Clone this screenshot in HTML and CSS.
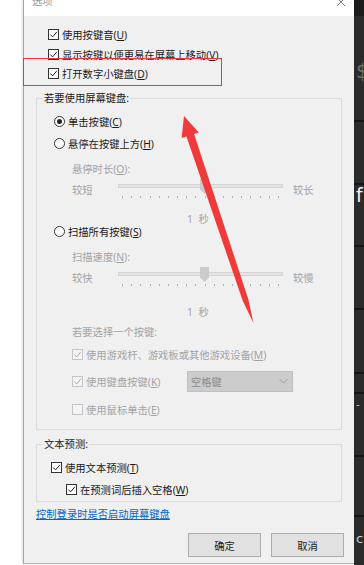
FILE: index.html
```html
<!DOCTYPE html>
<html lang="zh-CN">
<head>
<meta charset="UTF-8" />
<title>选项</title>
<link rel="stylesheet" href="styles.css">
</head>
<body>
<div class="screen">
  <div class="desk-left"></div>

  <div class="dialog">
    <div class="titlebar">
      <span class="title">选项</span>
      <svg class="close" width="10" height="10" viewBox="0 0 10 10">
        <path d="M1 1 L9 9 M9 1 L1 9" stroke="#808080" stroke-width="1" fill="none"/>
      </svg>
    </div>

    <div class="content">
      <div class="checks">
        <label class="check"><span class="box"><svg viewBox="0 0 9 9"><path d="M1.3 4.6 L3.6 6.9 L7.9 1.8"/></svg></span><span>使用按键音(<u>U</u>)</span></label>
        <label class="check"><span class="box"><svg viewBox="0 0 9 9"><path d="M1.3 4.6 L3.6 6.9 L7.9 1.8"/></svg></span><span>显示按键以便更易在屏幕上移动(<u>V</u>)</span></label>
        <label class="check"><span class="box"><svg viewBox="0 0 9 9"><path d="M1.3 4.6 L3.6 6.9 L7.9 1.8"/></svg></span><span>打开数字小键盘(<u>D</u>)</span></label>
      </div>

      <fieldset class="group group-keys">
        <legend>若要使用屏幕键盘:</legend>

        <label class="radio-row"><span class="radio on"></span><span>单击按键(<u>C</u>)</span></label>
        <label class="radio-row"><span class="radio"></span><span>悬停在按键上方(<u>H</u>)</span></label>

        <div class="sub hover-label">悬停时长(<u>O</u>):</div>
        <div class="slider-row">
          <span class="s-label">较短</span>
          <div class="slider">
            <div class="track"></div>
            <div class="thumb"></div>
            <div class="ticks"><i></i><i></i><i></i><i></i><i></i><i></i><i></i><i></i><i></i><i></i><i></i><i></i><i></i><i></i><i></i><i></i><i></i><i></i></div>
          </div>
          <span class="s-label">较长</span>
        </div>
        <div class="value v1">1 秒</div>

        <label class="radio-row scan"><span class="radio"></span><span>扫描所有按键(<u>S</u>)</span></label>

        <div class="sub scan-label">扫描速度(<u>N</u>):</div>
        <div class="slider-row">
          <span class="s-label">较快</span>
          <div class="slider">
            <div class="track"></div>
            <div class="thumb"></div>
            <div class="ticks"><i></i><i></i><i></i><i></i><i></i><i></i><i></i><i></i><i></i><i></i><i></i><i></i><i></i><i></i><i></i><i></i><i></i><i></i></div>
          </div>
          <span class="s-label">较慢</span>
        </div>
        <div class="value v2">1 秒</div>

        <div class="sub pick-label">若要选择一个按键:</div>
        <label class="check dim row-m"><span class="box"><svg viewBox="0 0 9 9"><path d="M1.3 4.6 L3.6 6.9 L7.9 1.8"/></svg></span><span>使用游戏杆、游戏板或其他游戏设备(<u>M</u>)</span></label>
        <div class="key-row">
          <label class="check dim"><span class="box"><svg viewBox="0 0 9 9"><path d="M1.3 4.6 L3.6 6.9 L7.9 1.8"/></svg></span><span>使用键盘按键(<u>K</u>)</span></label>
          <div class="select">
            <span>空格键</span>
            <svg width="9" height="6" viewBox="0 0 9 6"><path d="M0.5 1 L4.5 5 L8.5 1" stroke="#9a9a9a" fill="none"/></svg>
          </div>
        </div>
        <label class="check dim row-e"><span class="box"></span><span>使用鼠标单击(<u>E</u>)</span></label>
      </fieldset>

      <fieldset class="group group-text">
        <legend>文本预测:</legend>
        <label class="check row-t"><span class="box"><svg viewBox="0 0 9 9"><path d="M1.3 4.6 L3.6 6.9 L7.9 1.8"/></svg></span><span>使用文本预测(<u>T</u>)</span></label>
        <label class="check row-w"><span class="box"><svg viewBox="0 0 9 9"><path d="M1.3 4.6 L3.6 6.9 L7.9 1.8"/></svg></span><span>在预测词后插入空格(<u>W</u>)</span></label>
      </fieldset>

      <a class="link" href="#">控制登录时是否启动屏幕键盘</a>

      <div class="buttons">
        <button class="btn">确定</button>
        <button class="btn">取消</button>
      </div>
    </div>
  </div>

  <div class="desk-right">
    <div class="strip top"></div>
    <div class="strip h104"><span class="glyph dollar">$</span></div>
    <div class="strip h61"></div>
    <div class="strip h60"><span class="glyph f">f</span></div>
    <div class="strip h61"></div>
    <div class="strip h62"></div>
    <div class="strip h18"></div>
    <div class="strip h61"><span class="glyph dash">-</span></div>
    <div class="strip h58"></div>
    <div class="strip last"><span class="glyph c">c</span></div>
  </div>

  <!-- 标注 -->
  <div class="mark"></div>
  <svg class="arrow" width="364" height="565" viewBox="0 0 364 565">
    <polygon fill="#f03a3a" points="184,116 198.8,132.4 194.1,133.9 248.3,299.2 253.5,323 242.7,300.8 186.5,136.4 181.6,138"/>
  </svg>
</div>
</body>
</html>
```

FILE: styles.css
```css
/* Reset */
* {
  margin: 0;
  padding: 0;
  box-sizing: border-box;
}

body {
  width: 364px;
  height: 565px;
  overflow: hidden;
  background: #fff;
  font-family: "Noto Sans", "Noto Sans CJK SC", sans-serif;
  font-size: 10.3px;
  color: #1a1a1a;
}

u {
  text-decoration: underline;
  text-underline-offset: 1px;
}

.screen {
  position: relative;
  display: flex;
  height: 565px;
}

.desk-left {
  width: 23px;
  background: #fff;
}

/* 对话框 */
.dialog {
  width: 331px;
  align-self: flex-start;
  background: #f0f0f0;
  border-left: 1px solid #a6a6a6;
  border-bottom: 1px solid #b4b4b4;
  box-shadow: -1px 0 2px rgba(0, 0, 0, 0.12);
  display: flex;
  flex-direction: column;
}

.titlebar {
  height: 16px;
  background: #fff;
  display: flex;
  justify-content: space-between;
  align-items: flex-start;
  overflow: hidden;
}

.title {
  margin: -6px 0 0 8px;
  line-height: 14px;
  color: #9a9a9a;
}

.close {
  margin: -3px 8px 0 0;
}

.content {
  padding: 9px 12px 6px;
  display: flex;
  flex-direction: column;
}

/* 复选框 */
.check {
  display: flex;
  align-items: center;
  gap: 3px;
  height: 19.5px;
  white-space: nowrap;
}

.box {
  width: 11px;
  height: 11px;
  border: 1px solid #333;
  background: #fff;
  display: flex;
  flex: none;
}

.box svg {
  width: 9px;
  height: 9px;
}

.box path {
  stroke: #222;
  stroke-width: 1;
  fill: none;
}

.checks {
  padding-left: 12px;
}

.check.dim {
  color: #a3a3a3;
}

.check.dim .box {
  border-color: #c4c4c4;
  background: #f4f4f4;
}

.check.dim .box path {
  stroke: #aaa;
}

/* 分组框 */
.group {
  border: 1px solid #dcdcdc;
  min-inline-size: 0;
}

.group legend {
  margin-left: 6px;
  padding: 0 1px;
  line-height: 14px;
}

.group-keys {
  margin-top: 7.5px;
  padding: 5px 0 10px;
}

.radio-row {
  display: flex;
  align-items: center;
  gap: 3px;
  height: 22px;
  padding-left: 17px;
}

.radio-row.scan {
  height: 12px;
}

.radio {
  width: 11px;
  height: 11px;
  border: 1px solid #333;
  border-radius: 50%;
  background: #fff;
  display: flex;
  align-items: center;
  justify-content: center;
}

.radio.on::after {
  content: "";
  width: 5px;
  height: 5px;
  border-radius: 50%;
  background: #222;
}

.sub {
  color: #a3a3a3;
  padding-left: 35px;
  height: 18px;
  line-height: 18px;
}

.hover-label {
  margin-top: 6px;
}

.scan-label {
  margin-top: 11px;
}

.pick-label {
  margin-top: 6px;
  height: 14px;
  line-height: 14px;
}

/* 滑块 */
.slider-row {
  display: flex;
  height: 24px;
  padding-left: 35px;
  color: #a3a3a3;
}

.s-label {
  width: 46px;
  line-height: 25px;
}

.slider-row .s-label:last-child {
  margin-left: 10px;
}

.slider {
  position: relative;
  width: 165px;
}

.track {
  margin-top: 6px;
  height: 4px;
  border: 1px solid #d2d2d2;
  background: #e6e6e6;
}

.thumb {
  position: absolute;
  top: 1px;
  left: 82px;
  width: 9px;
  height: 15px;
  background: #cbcbcb;
  clip-path: polygon(0 0, 100% 0, 100% 68%, 50% 100%, 0 68%);
}

.ticks {
  display: flex;
  justify-content: space-between;
  margin: 8px 4px 0;
}

.ticks i {
  width: 1px;
  height: 2px;
  background: #b4b4b4;
}

.value {
  color: #a3a3a3;
  padding-left: 150px;
  height: 12px;
  line-height: 12px;
  word-spacing: 3px;
}

.v1 {
  margin-top: 11px;
}

.v2 {
  margin-top: 15px;
  height: 14px;
  line-height: 14px;
}

.row-m {
  margin-top: 5px;
  height: 20px;
  padding-left: 35px;
}

.key-row {
  display: flex;
  align-items: center;
  margin-top: 6px;
  height: 22px;
  padding-left: 35px;
}

.key-row .check {
  width: 115px;
}

.select {
  width: 106px;
  height: 21px;
  background: #cccccc;
  border: 1px solid #bfbfbf;
  color: #8a8a8a;
  display: flex;
  align-items: center;
  justify-content: space-between;
  padding: 0 4px 0 3px;
}

.row-e {
  margin-top: 7px;
  height: 20px;
  padding-left: 35px;
}

.group-text {
  margin-top: 7px;
  padding: 6px 0 2px;
}

.row-t {
  height: 20px;
  padding-left: 14px;
}

.row-w {
  margin-top: 2px;
  height: 20px;
  padding-left: 29px;
}

.link {
  margin-top: 5px;
  height: 14px;
  line-height: 14px;
  color: #0066cc;
  text-decoration: underline;
  align-self: flex-start;
}

.buttons {
  display: flex;
  justify-content: flex-end;
  gap: 10px;
  margin: 12px -2px 0 0;
}

.btn {
  width: 73px;
  height: 24px;
  background: #e1e1e1;
  border: 1px solid #adadad;
  font-family: inherit;
  font-size: 10.3px;
  color: #1a1a1a;
}

/* 右侧背景窗口 */
.desk-right {
  width: 10px;
  background: #2b2b2b;
  display: flex;
  flex-direction: column;
  overflow: hidden;
}

.strip {
  position: relative;
  overflow: hidden;
  border-top: 2px solid #161616;
}

.strip.top {
  height: 16px;
  background: #1c1c1c;
  border-top: none;
}

.h104 { height: 104px; border-top: none; }
.h61 { height: 63px; }
.h60 { height: 62px; }
.h62 { height: 64px; }
.h18 { height: 20px; }
.h58 { height: 60px; }
.last { flex: 1; }

.glyph {
  display: block;
  padding-left: 2px;
  font-family: "DejaVu Sans", sans-serif;
  white-space: nowrap;
}

.dollar {
  margin-top: 44px;
  font-size: 20px;
  line-height: 22px;
  color: #6e6e6e;
}

.f {
  margin-top: 0;
  font-size: 19px;
  line-height: 20px;
  color: #f2f2f2;
}

.dash {
  margin-top: 4px;
  color: #bdbdbd;
}

.c {
  margin-top: 14px;
  font-size: 13px;
  color: #cfcfcf;
}

/* 红色标注 */
.mark {
  position: absolute;
  left: 23px;
  top: 58px;
  width: 199px;
  height: 28px;
  border: 1.5px solid #e8393b;
}

.arrow {
  position: absolute;
  left: 0;
  top: 0;
  pointer-events: none;
}
```
